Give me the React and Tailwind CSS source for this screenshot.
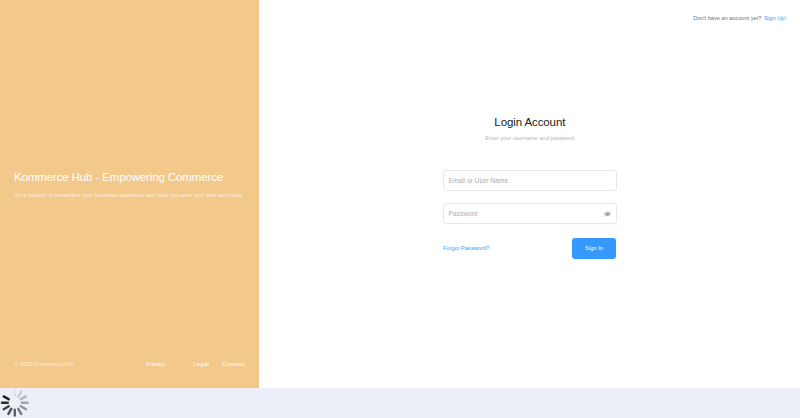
import React from "react";

const spokes = ["#dfe2e8", "#c9cacf", "#b5b6ba", "#a3a4a7", "#929395", "#767779", "#606163", "#505153", "#3f4041", "#2c2d2e", "#1b1b1c"];

function Spinner() {
  return (
    <svg className="block h-[30px] w-[30px]" viewBox="0 0 30 30" strokeWidth="2.4" strokeLinecap="round">
      {spokes.map((color, i) => (
        <line key={i} x1="14.8" y1="2" x2="14.8" y2="7.8" stroke={color} transform={`rotate(${i * 30} 14.8 14.8)`} />
      ))}
    </svg>
  );
}

function EyeSlash() {
  return (
    <svg className="h-[6px] w-[7px] shrink-0" viewBox="0 0 16 14" fill="none" stroke="#a4a6ab" strokeWidth="1.6" strokeLinecap="round">
      <path d="M1 7C4 1.5 12 1.5 15 7C12 12.500 4 12.500 1 7Z" fill="#c9cbd0" />
      <circle cx="8" cy="7" r="2.400" fill="#8f929a" />
      <path d="M2.500 12.500L13.500 1.500" />
    </svg>
  );
}

export default function App() {
  return (
    <div className="flex h-[418px] w-[800px] flex-col overflow-hidden bg-[#eceff7] font-['Liberation_Sans',Arial,sans-serif] text-[6px] whitespace-nowrap">
      <div className="flex h-[388px] shrink-0">
        <aside className="flex w-[259.400px] shrink-0 flex-col bg-[#f2c98b] px-3.5 text-white">
          <div className="pt-[170px]">
            <h1 className="text-[11.5px] leading-[14px] tracking-[-0.13px]">Kommerce Hub - Empowering Commerce</h1>
            <p className="mt-[8px] text-[5.64px] leading-[7px] text-white/75">
              On a mission to streamline your business operations and help you save your time and costs.
            </p>
          </div>
          <footer className="mt-auto flex pb-[20px] text-[6px] leading-[8px]">
            <span className="w-[132.500px] text-[5.7px] text-white/70">© 2025 Kommerce Hub</span>
            <a className="w-[47px] text-[5.7px]">Privacy</a>
            <a className="w-[29px] tracking-[0.2px]">Legal</a>
            <a className="tracking-[0.35px]">Contact</a>
          </footer>
        </aside>
        <main className="flex flex-1 flex-col bg-white">
          <div className="flex justify-end gap-[3px] pt-[15px] pr-3.5 text-[5.65px] leading-[7px]">
            <span className="text-[#6c7080]">Don't have an account yet?</span>
            <a className="text-[#3699ff]">Sign Up!</a>
          </div>
          <form className="mt-[92px] ml-[183.700px] flex w-[173.500px] flex-col">
            <h2 className="text-center text-[11.5px] leading-[16px] tracking-[-0.1px] text-[#212121]">Login Account</h2>
            <p className="mt-[5px] text-center text-[5.65px] leading-[7px] text-[#b5b5c3]">Enter your username and password</p>
            <div className="mt-7 flex h-[21px] items-center rounded-[3px] border border-[#e6e7ea] px-[4.500px] text-[6.6px] text-[#adadb0]">
              Email or User Name
            </div>
            <div className="mt-3 flex h-[21px] items-center justify-between rounded-[3px] border border-[#e6e7ea] px-[4.500px] text-[6.6px] text-[#adadb0]">
              <span>Password</span>
              <EyeSlash />
            </div>
            <div className="mt-3.5 flex items-center justify-between">
              <a className="text-[5.7px] text-[#3699ff]">Forgot Password?</a>
              <button type="button" className="mr-[0.5px] h-[21px] w-[44px] rounded-[3px] bg-[#3699ff] text-[5.8px] text-white">Sign In</button>
            </div>
          </form>
        </main>
      </div>
      <Spinner />
    </div>
  );
}
